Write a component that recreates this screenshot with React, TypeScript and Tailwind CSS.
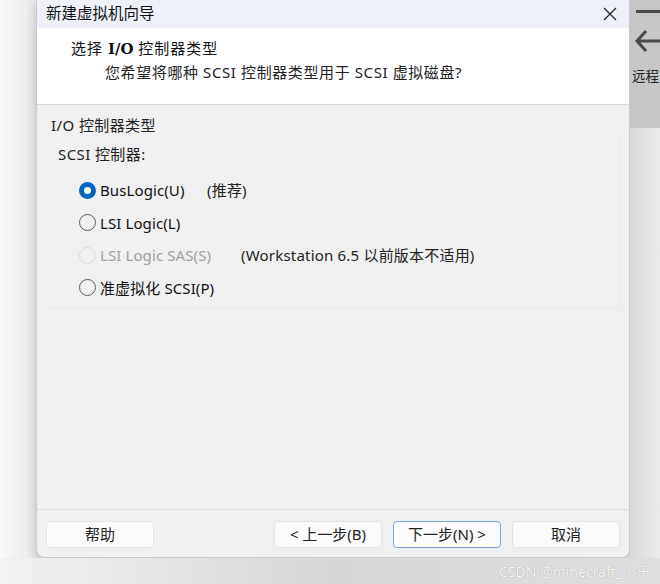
import React, { useState } from 'react';

const font = { fontFamily: '"Noto Sans", "Noto Sans CJK SC", sans-serif' };

type Option = { id: string; label: string; note?: string; disabled?: boolean };

const options: Option[] = [
  { id: 'bus', label: 'BusLogic(U)', note: '(推荐)' },
  { id: 'lsi', label: 'LSI Logic(L)' },
  { id: 'sas', label: 'LSI Logic SAS(S)', note: '(Workstation 6.5 以前版本不适用)', disabled: true },
  { id: 'pv', label: '准虚拟化 SCSI(P)' },
];

function Radio({ checked, disabled }: { checked: boolean; disabled?: boolean }) {
  if (checked) {
    return (
      <span className="flex h-[17px] w-[17px] shrink-0 items-center justify-center rounded-full bg-[#0067c0]">
        <span className="h-[7px] w-[7px] rounded-full bg-white" />
      </span>
    );
  }
  return (
    <span
      className={`h-[17px] w-[17px] shrink-0 rounded-full border bg-transparent ${
        disabled ? 'border-[#dadada]' : 'border-[#5c5c5c]'
      }`}
    />
  );
}

export default function App() {
  const [selected, setSelected] = useState('bus');

  return (
    <div className="flex h-[584px] w-[660px] flex-col overflow-hidden bg-[#e4e4e4] text-[#1a1a1a]" style={font}>
      <div className="flex h-[558px]">
        {/* left backdrop */}
        <div className="h-full w-[36px] bg-gradient-to-r from-[#fafafa] to-[#e8e8e8]" />

        {/* dialog */}
        <div className="flex h-full w-[594px] flex-col overflow-hidden rounded-b-lg border-r border-b border-l border-[#c9c9c9] bg-[#f0f0f0] shadow-[0_4px_12px_rgba(0,0,0,0.18)]">
          {/* title bar */}
          <div className="flex h-[28px] items-center justify-between bg-[#eef2f8] pr-[10px] pl-[9px]">
            <span className="text-[15.5px] text-[#111]">新建虚拟机向导</span>
            <svg width="14" height="14" viewBox="0 0 14 14" className="mr-[2px]">
              <path d="M1 1 L13 13 M13 1 L1 13" stroke="#222" strokeWidth="1.2" />
            </svg>
          </div>

          {/* header */}
          <div className="h-[77px] border-b border-[#d6d6d6] bg-white pt-[8px]">
            <div className="pl-[34px] text-[15px] leading-[24px] tracking-[1px] text-[#111]">
              选择 <span className="font-bold tracking-normal" style={{ fontFamily: '"DejaVu Serif", serif' }}>I/O</span> 控制器类型
            </div>
            <div className="pl-[68px] text-[15px] leading-[22px] tracking-[0.6px] text-[#222]">
              您希望将哪种 SCSI 控制器类型用于 SCSI 虚拟磁盘?
            </div>
          </div>

          {/* body */}
          <div className="flex-1 px-[9px] pt-[10px]">
            <div className="text-[15px] leading-[20px] tracking-[0.4px] text-[#222]">
              <span className="pl-[5px]">I/O 控制器类型</span>
            </div>
            <div className="h-[174px] rounded-[3px] border-r border-b border-[#e8e8e8]">
              <div className="pl-[12px] pt-[9px] text-[15px] leading-[20px] tracking-[0.4px] text-[#222]">SCSI 控制器:</div>
              <div className="mt-[10px] flex flex-col">
                {options.map((o) => (
                  <button
                    key={o.id}
                    type="button"
                    disabled={o.disabled}
                    onClick={() => setSelected(o.id)}
                    className="flex h-[32.5px] items-center pl-[33px] text-left"
                  >
                    <Radio checked={selected === o.id} disabled={o.disabled} />
                    <span
                      className={`ml-[4px] w-[108px] text-[15px] tracking-[0.1px] whitespace-nowrap ${
                        o.disabled ? 'text-[#a0a0a0]' : 'text-[#111]'
                      }`}
                    >
                      {o.label}
                    </span>
                    {o.note && (
                      <span
                        className={`text-[15px] tracking-[0.2px] whitespace-nowrap text-[#222] ${
                          o.disabled ? 'ml-[33px]' : 'ml-[-1px]'
                        }`}
                      >
                        {o.note}
                      </span>
                    )}
                  </button>
                ))}
              </div>
            </div>
          </div>

          {/* footer */}
          <div className="flex h-[48px] items-start border-t border-[#dcdcdc] px-[9px] pt-[11px]">
            <button className="h-[27px] w-[108px] rounded-[4px] border border-[#e3e3e3] bg-[#fbfbfb] text-[15px] text-[#222]">
              帮助
            </button>
            <div className="ml-auto flex gap-[11px]">
              <button className="h-[27px] w-[108px] rounded-[4px] border border-[#e3e3e3] bg-[#fbfbfb] text-[15px] text-[#222]">
                &lt; 上一步(B)
              </button>
              <button className="h-[27px] w-[108px] rounded-[4px] border border-[#7aa7d9] bg-[#fbfbfb] text-[15px] text-[#222]">
                下一步(N) &gt;
              </button>
              <button className="h-[27px] w-[108px] rounded-[4px] border border-[#e3e3e3] bg-[#fbfbfb] text-[15px] text-[#222]">
                取消
              </button>
            </div>
          </div>
        </div>

        {/* right backdrop (another window) */}
        <div className="flex h-full w-[30px] flex-col overflow-hidden">
          <div className="h-[128px] bg-[#c6c6c6] pt-[10px] pl-[6px]">
            <div className="h-[3px] w-[26px] bg-[#4a4a4a]" />
            <svg width="30" height="26" viewBox="0 0 30 26" className="mt-[15px] -ml-[2px]">
              <path d="M12 3 L3 13 L12 23 M3 13 L30 13" stroke="#4a4a4a" strokeWidth="3" fill="none" />
            </svg>
            <div className="mt-[12px] -ml-[4px] text-[13.5px] whitespace-nowrap text-[#222]">远程</div>
          </div>
          <div className="flex-1 bg-gradient-to-r from-[#d8d8d8] to-[#ebebeb]" />
        </div>
      </div>

      {/* bottom backdrop with watermark */}
      <div className="flex flex-1 items-center justify-end bg-gradient-to-r from-[#f2f2f2] via-[#d6d6d6] to-[#dedede] pr-[10px]">
        <span className="text-[14px] text-[#f6f6f6]" style={{ textShadow: '0 0 1px #9a9a9a' }}>
          CSDN @minecraft_小乐
        </span>
      </div>
    </div>
  );
}
